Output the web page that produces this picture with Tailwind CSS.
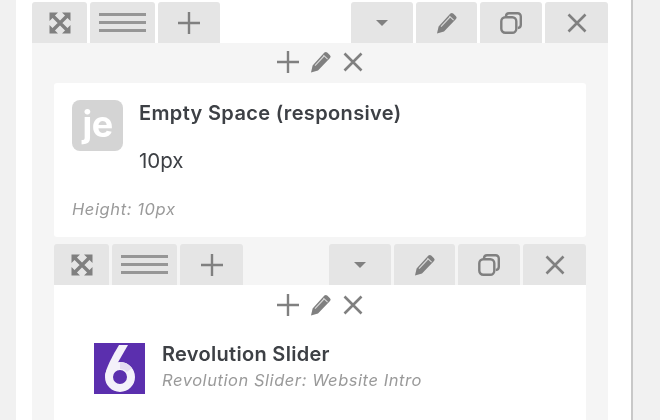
<!DOCTYPE html>
<html lang="en">
<head>
  <meta charset="UTF-8">
  <title>Page builder</title>
  <script src="https://cdn.jsdelivr.net/npm/@tailwindcss/browser@4"></script>
</head>
<body class="bg-[#f1f1f1] font-['Inter','Noto_Sans',sans-serif] overflow-hidden">
  <svg class="hidden">
    <symbol id="expand" viewBox="0 0 22 22">
      <path d="M4 4l14 14M18 4L4 18" stroke="#808080" stroke-width="3.4" fill="none"/>
      <path d="M0.5 0.5h8.5L0.5 9zM21.5 0.5v8.5L13 0.5zM0.5 21.5V13l8.5 8.5zM21.5 21.5H13l8.5-8.5z" fill="#808080"/>
    </symbol>
    <symbol id="plus" viewBox="0 0 24 24">
      <path d="M12 1v22M1 12h22" stroke="#808080" stroke-width="2.4" fill="none"/>
    </symbol>
    <symbol id="pencil" viewBox="0 0 22 22">
      <path d="M1 21.5l1.6-7L14.4 1.6a2 2 0 0 1 2.8 0l2.8 2.6a2 2 0 0 1 0 2.8L8 19.6z" fill="#808080"/>
      <path d="M13.4 4.2l4.2 4M5 14.6l9-9.6" stroke="#d8d8d8" stroke-width="1.1" fill="none"/>
    </symbol>
    <symbol id="close" viewBox="0 0 20 20">
      <path d="M1.5 1.5l17 17M18.5 1.5l-17 17" stroke="#808080" stroke-width="2.6" fill="none"/>
    </symbol>
    <symbol id="clone" viewBox="0 0 22 22">
      <rect x="1.3" y="5.3" width="15" height="15.4" rx="4" fill="none" stroke="#808080" stroke-width="2.4"/>
      <path d="M6 4.2V4a3 3 0 0 1 3-2.8h8.6A3.2 3.2 0 0 1 20.8 4.4v8.4a3.2 3.2 0 0 1-3 3.2" fill="none" stroke="#808080" stroke-width="2.4"/>
    </symbol>
  </svg>

  <div class="flex h-[420px] w-[660px] blur-[0.4px]">
    <div class="w-4 bg-[#f1f1f1]"></div>
    <div class="w-4 bg-white"></div>

    <main class="w-[576px] pt-[2px] bg-white">
      <!-- outer row toolbar -->
      <div class="flex justify-between h-[41px]">
        <div class="flex gap-[3px]">
          <div class="w-[55px] bg-[#e5e5e5] rounded-t-[3px] flex items-center justify-center"><svg class="w-[22px] h-[22px]"><use href="#expand"/></svg></div>
          <div class="w-[65px] bg-[#e5e5e5] rounded-t-[3px] flex flex-col items-center justify-center gap-[5px]">
            <div class="w-[47px] h-[3px] bg-[#969696]"></div><div class="w-[47px] h-[3px] bg-[#969696]"></div><div class="w-[47px] h-[3px] bg-[#969696]"></div>
          </div>
          <div class="w-[62px] bg-[#e5e5e5] rounded-t-[3px] flex items-center justify-center"><svg class="w-[24px] h-[24px]"><use href="#plus"/></svg></div>
        </div>
        <div class="flex gap-[3px]">
          <div class="w-[62px] bg-[#e5e5e5] rounded-t-[3px] flex items-center justify-center"><div class="w-0 h-0 border-x-[6px] border-x-transparent border-t-[6px] border-t-[#808080]"></div></div>
          <div class="w-[61px] bg-[#e5e5e5] rounded-t-[3px] flex items-center justify-center"><svg class="w-[22px] h-[22px]"><use href="#pencil"/></svg></div>
          <div class="w-[62px] bg-[#e5e5e5] rounded-t-[3px] flex items-center justify-center"><svg class="w-[22px] h-[22px]"><use href="#clone"/></svg></div>
          <div class="w-[63px] bg-[#e5e5e5] rounded-t-[3px] flex items-center justify-center"><svg class="w-[20px] h-[20px]"><use href="#close"/></svg></div>
        </div>
      </div>

      <div class="bg-[#f5f5f5] px-[22px] h-[377px]">
        <div class="h-[40px] flex items-center justify-center gap-[10px] pb-[2px] -ml-[2px]">
          <svg class="w-[24px] h-[24px]"><use href="#plus"/></svg>
          <svg class="w-[22px] h-[22px]"><use href="#pencil"/></svg>
          <svg class="w-[20px] h-[20px] ml-[1px]"><use href="#close"/></svg>
        </div>

        <!-- empty space element -->
        <section class="bg-white rounded-[3px] h-[154px] pl-[18px] pt-[17px]">
          <div class="flex gap-4">
            <div class="w-[51px] h-[51px] rounded-[8px] bg-[#d4d4d4] flex items-start justify-center pt-[6px] text-white font-bold text-[36px] leading-none tracking-[-0.5px]">je</div>
            <div class="text-[#3d4045]">
              <h3 class="text-[20px] leading-[26px] font-semibold tracking-[0.35px]">Empty Space (responsive)</h3>
              <p class="text-[20.5px] leading-[26px] mt-[22px]">10px</p>
            </div>
          </div>
          <p class="italic text-[16.5px] leading-[20px] text-[#9a9a9a] tracking-[0.6px] mt-[25px]">Height: 10px</p>
        </section>

        <!-- inner row toolbar -->
        <div class="flex justify-between h-[41px] mt-[7px]">
          <div class="flex gap-[3px]">
            <div class="w-[55px] bg-[#e5e5e5] rounded-t-[3px] flex items-center justify-center"><svg class="w-[22px] h-[22px]"><use href="#expand"/></svg></div>
            <div class="w-[65px] bg-[#e5e5e5] rounded-t-[3px] flex flex-col items-center justify-center gap-[5px]">
              <div class="w-[47px] h-[3px] bg-[#969696]"></div><div class="w-[47px] h-[3px] bg-[#969696]"></div><div class="w-[47px] h-[3px] bg-[#969696]"></div>
            </div>
            <div class="w-[63px] bg-[#e5e5e5] rounded-t-[3px] flex items-center justify-center"><svg class="w-[24px] h-[24px]"><use href="#plus"/></svg></div>
          </div>
          <div class="flex gap-[3px]">
            <div class="w-[62px] bg-[#e5e5e5] rounded-t-[3px] flex items-center justify-center"><div class="w-0 h-0 border-x-[6px] border-x-transparent border-t-[6px] border-t-[#808080]"></div></div>
            <div class="w-[61px] bg-[#e5e5e5] rounded-t-[3px] flex items-center justify-center"><svg class="w-[22px] h-[22px]"><use href="#pencil"/></svg></div>
            <div class="w-[62px] bg-[#e5e5e5] rounded-t-[3px] flex items-center justify-center"><svg class="w-[22px] h-[22px]"><use href="#clone"/></svg></div>
            <div class="w-[63px] bg-[#e5e5e5] rounded-t-[3px] flex items-center justify-center"><svg class="w-[20px] h-[20px]"><use href="#close"/></svg></div>
          </div>
        </div>

        <!-- slider element -->
        <section class="bg-white h-[140px]">
          <div class="h-[40px] flex items-center justify-center gap-[10px] -ml-[2px]">
            <svg class="w-[24px] h-[24px]"><use href="#plus"/></svg>
            <svg class="w-[22px] h-[22px]"><use href="#pencil"/></svg>
            <svg class="w-[20px] h-[20px] ml-[1px]"><use href="#close"/></svg>
          </div>
          <div class="flex gap-[17px] pl-[40px] pt-[18px]">
            <div class="w-[51px] h-[51px] bg-[#5b2fae] flex items-center justify-center">
              <svg class="w-[30px] h-[47px]" viewBox="0 0 30 47">
                <circle cx="15" cy="32" r="11" fill="none" stroke="#f4f1fa" stroke-width="8"/>
                <path d="M14 0h9L12 19 0 32C0 24 8 10 14 0z" fill="#f4f1fa"/>
                <path d="M15 17a15 15 0 0 1 12 6l-5 4a8 8 0 0 0-7-3z" fill="#e4dcf2"/>
              </svg>
            </div>
            <div>
              <h3 class="text-[20px] leading-[26px] font-semibold text-[#3d4045] tracking-[0.3px] -mt-[2px]">Revolution Slider</h3>
              <p class="italic text-[16.5px] leading-[20px] text-[#9a9a9a] tracking-[0.55px] mt-[3px]">Revolution Slider: Website Intro</p>
            </div>
          </div>
        </section>
      </div>
    </main>

    <div class="w-[23px] bg-white"></div>
    <div class="w-[2px] bg-[#c8c8c8]"></div>
    <div class="flex-1 bg-[#f1f1f1]"></div>
  </div>
</body>
</html>
